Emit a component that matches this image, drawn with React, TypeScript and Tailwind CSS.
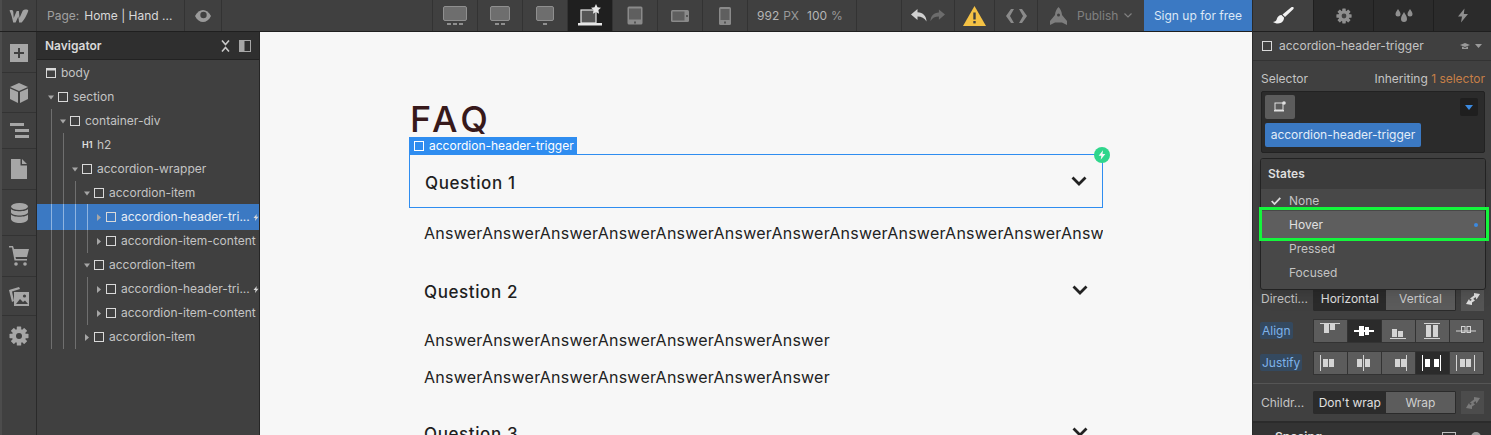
import React from 'react';

const ui = "font-['Inter','Liberation_Sans',sans-serif]";

function Box({ className = '' }: { className?: string }) {
    return <span className={`block w-[10px] h-[10px] border border-[#d9d9d9] shrink-0 ${className}`} />;
}

function Caret({ open }: { open: boolean }) {
    return (
        <svg width="6" height="7" viewBox="0 0 6 7" className="shrink-0 ml-[-3px] mr-[4px]">
            {open ? <path d="M0 1.500h6L3 5.500z" fill="#a6a6a6" /> : <path d="M1 0v7L5 3.500z" fill="#a6a6a6" />}
        </svg>
    );
}

function Guides({ n, light }: { n: number; light?: boolean }) {
    return (
        <>
            {Array.from({ length: n }).map((_, i) => (
                <span key={i} className={`block w-[12px] h-full shrink-0 border-l ${light ? 'border-[#8fb4e0]' : 'border-[#6f6f6f]'}`} />
            ))}
        </>
    );
}

function Bolt({ className = '' }: { className?: string }) {
    return (
        <svg viewBox="0 0 12 14" className={className} fill="currentColor">
            <path d="M7.500 0 1 8h4l-1 6 7-8.500H6.800z" />
        </svg>
    );
}

function Gear({ size, color }: { size: number; color: string }) {
    const teeth = [0, 45, 90, 135];
    return (
        <svg width={size} height={size} viewBox="0 0 20 20">
            {teeth.map((a) => (
                <rect key={a} x="7.800" y="0.500" width="4.400" height="19" rx="0.600" fill={color} transform={`rotate(${a} 10 10)`} />
            ))}
            <circle cx="10" cy="10" r="7" fill={color} />
            <circle cx="10" cy="10" r="3" fill="#404040" />
        </svg>
    );
}

type Row = { label: string; depth: number; caret?: 'open' | 'closed'; selected?: boolean; bolt?: boolean };

const ROWS: Row[] = [
    { label: 'section', depth: 0, caret: 'open' },
    { label: 'container-div', depth: 1, caret: 'open' },
    { label: 'h2', depth: 2 },
    { label: 'accordion-wrapper', depth: 2, caret: 'open' },
    { label: 'accordion-item', depth: 3, caret: 'open' },
    { label: 'accordion-header-tri...', depth: 4, caret: 'closed', selected: true, bolt: true },
    { label: 'accordion-item-content', depth: 4, caret: 'closed' },
    { label: 'accordion-item', depth: 3, caret: 'open' },
    { label: 'accordion-header-tri...', depth: 4, caret: 'closed', bolt: true },
    { label: 'accordion-item-content', depth: 4, caret: 'closed' },
    { label: 'accordion-item', depth: 3, caret: 'closed' },
];

function TreeRow({ row }: { row: Row }) {
    const isH = row.label === 'h2';
    return (
        <div
            className={`relative flex items-center pl-[14px] whitespace-nowrap overflow-hidden ${
                row.selected ? 'h-[26px] -my-px z-10 bg-[#3b79c3] text-[#e8eef6]' : 'h-[24px] text-[#c4c4c4]'
            }`}
        >
            <Guides n={row.depth} light={row.selected} />
            {isH ? (
                <span className="ml-[7px] mr-[6px] text-[9px] font-semibold text-[#e0e0e0] w-[9px]">H1</span>
            ) : (
                <>
                    {row.caret && <Caret open={row.caret === 'open'} />}
                    <Box className="mr-[5px]" />
                </>
            )}
            <span>{row.label}</span>
            {row.bolt && <Bolt className="absolute right-0 w-[6px] h-[9px] text-[#d9d9d9]" />}
        </div>
    );
}

function Monitor({ dots }: { dots: number }) {
    const w = dots === 3 ? 24 : dots === 2 ? 20 : 18;
    return (
        <div className="flex flex-col items-center gap-[2px]">
            <span className="block h-[15px] bg-[#6e6e6e] border-[1.5px] border-[#8f8f8f] rounded-[2px]" style={{ width: w }} />
            <span className="flex gap-[2px]">
                {Array.from({ length: dots }).map((_, i) => (
                    <span key={i} className="block w-[4px] h-[2px] bg-[#8f8f8f]" />
                ))}
            </span>
        </div>
    );
}

function Cell({ children, active }: { children: React.ReactNode; active?: boolean }) {
    return (
        <div className={`w-[45px] h-full flex items-center justify-center border-r border-[#333] ${active ? 'bg-[#1f1f1f]' : ''}`}>
            {children}
        </div>
    );
}

function TopBar() {
    return (
        <div className={`h-[32px] flex items-stretch bg-[#404040] border-b border-[#1f1f1f] text-[12px] ${ui}`}>
            <div className="w-[37px] flex items-center justify-center border-r border-[#333] border-l-2 border-l-[#4c4c4c]">
                <svg width="20" height="14" viewBox="0 0 20 14">
                    <path d="M0.500 1.500c2 -.8 3.600 -.6 3.800 1.500l.4 6 3-7h2.200l.6 7 3.200-7.200c1-1.400 5-1.800 5.600-.4-.4 3-4.600 10-6.600 12.100h-2.600l-.8-5.900-2.700 5.900H4.200C3.400 9.500 2.300 5 .5 1.500z" fill="#a3a3a3" />
                </svg>
            </div>
            <div className="w-[148px] flex items-center pl-[10px] whitespace-nowrap border-r border-[#333]">
                <span className="text-[#a0a0a0] mr-[5px]">Page:</span>
                <span className="text-[#d9d9d9]">Home | Hand ...</span>
            </div>
            <div className="w-[37px] flex items-center justify-center border-r border-[#333]">
                <svg width="16" height="12" viewBox="0 0 16 12">
                    <path d="M0 6c2-4 5-6 8-6s6 2 8 6c-2 4-5 6-8 6S2 10 0 6z" fill="#9a9a9a" />
                    <circle cx="8.500" cy="5" r="3.200" fill="#404040" />
                </svg>
            </div>
            <div className="w-[211px] border-r border-[#333]" />
            <Cell><Monitor dots={3} /></Cell>
            <Cell><Monitor dots={2} /></Cell>
            <Cell><Monitor dots={1} /></Cell>
            <Cell active>
                <svg width="26" height="24" viewBox="0 0 26 24">
                    <rect x="4" y="6" width="15" height="13" fill="#555" stroke="#e6e6e6" strokeWidth="1.200" />
                    <rect x="1" y="19" width="24" height="2.500" fill="#e6e6e6" />
                    <path d="M19 0l1.500 3.300 3.500.4-2.600 2.400.7 3.600-3.100-1.800-3.100 1.800.7-3.600L14 3.700l3.500-.4z" fill="#e6e6e6" />
                </svg>
            </Cell>
            <Cell>
                <svg width="16" height="20" viewBox="0 0 16 20">
                    <rect x="0.500" y="0.500" width="15" height="18" rx="1.500" fill="#8a8a8a" />
                    <rect x="2" y="2.500" width="12" height="11" fill="#5f5f5f" />
                    <rect x="7" y="15.500" width="2" height="2" fill="#555" />
                </svg>
            </Cell>
            <Cell>
                <svg width="18" height="12" viewBox="0 0 18 12">
                    <rect x="0" y="0" width="18" height="12" rx="1.500" fill="#8a8a8a" />
                    <rect x="1.500" y="1.500" width="12" height="9" fill="#5f5f5f" />
                    <rect x="15" y="5" width="2" height="2" fill="#555" />
                </svg>
            </Cell>
            <div className="w-[45px] h-full flex items-center justify-center border-r border-[#333]">
                <svg width="12" height="18" viewBox="0 0 12 18">
                    <rect width="12" height="18" rx="1.500" fill="#8a8a8a" />
                    <rect x="1.500" y="2" width="9" height="11" fill="#5f5f5f" />
                    <rect x="5" y="14.500" width="2" height="2" fill="#555" />
                </svg>
            </div>
            <div className="w-[109px] flex items-center pl-[9px] text-[#b5b5b5] whitespace-nowrap border-r border-[#333]">
                <span>992</span>
                <span className="ml-[4px] text-[#9a9a9a]">PX</span>
                <span className="ml-[8px]">100</span>
                <span className="ml-[4px] text-[#9a9a9a]">%</span>
            </div>
            <div className="w-[45px] border-r border-[#333]" />
            <div className="w-[53px] flex items-center justify-center gap-[3px] border-r border-[#333]">
                <svg width="16" height="13" viewBox="0 0 16 13">
                    <path d="M6.500 0 0 5.500 6.500 11V7.500c4 0 7 1.500 9 5C15.500 7 12 3.500 6.500 3.200z" fill="#d0d0d0" />
                </svg>
                <svg width="15" height="13" viewBox="0 0 16 13">
                    <path d="M9.500 0 16 5.500 9.500 11V7.500c-4 0-7 1.500-9 5C.5 7 4 3.500 9.500 3.200z" fill="#6c6c6c" />
                </svg>
            </div>
            <div className="w-[40px] flex items-center justify-center border-r border-[#333]">
                <svg width="23" height="20" viewBox="0 0 23 20">
                    <path d="M11.500 0 23 20H0z" fill="#f5c244" />
                    <rect x="10.300" y="6.500" width="2.400" height="7" fill="#404040" />
                    <rect x="10.300" y="15" width="2.400" height="2.400" fill="#404040" />
                </svg>
            </div>
            <div className="w-[43px] flex items-center justify-center border-r border-[#333]">
                <svg width="21" height="14" viewBox="0 0 21 14" fill="#8a8a8a">
                    <path d="M5 0h3L4 7l4 7H5L0 7zM16 0h-3l4 7-4 7h3l5-7z" />
                </svg>
            </div>
            <div className="flex-1 flex items-center pl-[12px] text-[#808080] whitespace-nowrap">
                <svg width="17" height="18" viewBox="0 0 17 18" className="mr-[10px]" fill="#7d7d7d">
                    <path d="M8.500 0c2.200 2 3.300 5 3.500 8l5 6v4l-5-2.500H5L0 18v-4l5-6c.2-3 1.300-6 3.500-8z" />
                    <circle cx="8.500" cy="8" r="1.500" fill="#404040" />
                </svg>
                <span>Publish</span>
                <svg width="8" height="5" viewBox="0 0 8 5" className="ml-[6px]">
                    <path d="M.5.5 4 4 7.500.5" fill="none" stroke="#808080" strokeWidth="1.200" />
                </svg>
            </div>
            <div className="w-[108px] flex items-center justify-center bg-[#3b79c3] text-[#dce8f6] whitespace-nowrap">Sign up for free</div>
        </div>
    );
}

function SideRail() {
    return (
        <div className="w-[37px] shrink-0 flex flex-col bg-[#404040] border-r border-[#2a2a2a] border-l-2 border-l-[#4c4c4c]">
            <div className="h-[41px] flex items-center justify-center border-b border-[#333] pt-[1px]">
                <span className="w-[18px] h-[18px] bg-[#a6a6a6] flex items-center justify-center">
                    <svg width="10" height="10" viewBox="0 0 10 10"><path d="M4 0h2v4h4v2H6v4H4V6H0V4h4z" fill="#404040" /></svg>
                </span>
            </div>
            <div className="h-[40px] flex items-center justify-center border-b border-[#333]">
                <svg width="18" height="20" viewBox="0 0 18 20" fill="#a6a6a6">
                    <path d="M9 0l9 4-9 4-9-4zM0 5.500l8 3.600V20l-8-4zM18 5.500l-8 3.600V20l8-4z" />
                </svg>
            </div>
            <div className="h-[36px] flex items-center justify-center border-b border-[#333]">
                <svg width="19" height="15" viewBox="0 0 19 15" fill="#a6a6a6">
                    <path d="M0 0h14v3H0zM5 6h14v3H5zM5 12h14v3H5z" />
                </svg>
            </div>
            <div className="h-[41px] flex items-center justify-center border-b border-[#333]">
                <svg width="16" height="20" viewBox="0 0 16 20" fill="#a6a6a6">
                    <path d="M0 0h9.500v6.500H16V20H0zM11 0l5 5h-5z" />
                </svg>
            </div>
            <div className="h-[46px] flex items-center justify-center border-b border-[#333]">
                <svg width="17" height="20" viewBox="0 0 17 20" fill="#a6a6a6">
                    <ellipse cx="8.500" cy="3.500" rx="8.500" ry="3.500" />
                    <path d="M0 6c2 3 15 3 17 0v3.500c-1 4-16 4-17 0zM0 11.500c2 3 15 3 17 0V16c-1 5.300-16 5.300-17 0z" />
                </svg>
            </div>
            <div className="h-[41px] flex items-center justify-center border-b border-[#333]">
                <svg width="20" height="20" viewBox="0 0 20 20" fill="#a6a6a6">
                    <path d="M0 0h4l1 3h15l-2 8H6.500l.5 2h11v1.500H5.500L3 1.500H0z" />
                    <circle cx="7" cy="18" r="1.800" />
                    <circle cx="16" cy="18" r="1.800" />
                </svg>
            </div>
            <div className="h-[39px] flex items-center justify-center border-b border-[#333]">
                <svg width="20" height="19" viewBox="0 0 20 19" fill="#a6a6a6">
                    <path d="M0 3 10 0l1 2-8 2.500L5 14l-2 1z" />
                    <path d="M5 5h15v14H5z" />
                    <circle cx="15.500" cy="9" r="1.600" fill="#404040" />
                    <path d="M7 17l4-5 3 3 2-1.500 3 3.500z" fill="#404040" />
                </svg>
            </div>
            <div className="h-[39px] flex items-center justify-center">
                <Gear size={20} color="#a6a6a6" />
            </div>
        </div>
    );
}

function Navigator() {
    return (
        <div className={`w-[223px] shrink-0 bg-[#404040] border-r border-[#262626] text-[12px] ${ui}`}>
            <div className="h-[28px] flex items-center justify-between pl-[8px] pr-[8px] bg-[#2f2f2f] border-b border-[#222]">
                <span className="text-[#d9d9d9] text-[12px] font-semibold">Navigator</span>
                <div className="flex items-center gap-[9px]">
                    <svg width="9" height="12" viewBox="0 0 9 12" fill="none" stroke="#c9c9c9" strokeWidth="1.600">
                        <path d="M1 .5l3.500 4L8 .5M1 11.500l3.500-4 3.500 4" />
                    </svg>
                    <svg width="12" height="12" viewBox="0 0 12 12">
                        <rect x="0" y="0" width="5" height="12" fill="#a6a6a6" />
                        <rect x="5" y="0.500" width="6.500" height="11" fill="none" stroke="#a6a6a6" />
                    </svg>
                </div>
            </div>
            <div className="pt-[1px]">
                <div className="h-[24px] flex items-center pl-[9px] text-[#c4c4c4]">
                    <svg width="10" height="10" viewBox="0 0 10 10" className="mr-[5px] shrink-0">
                        <rect x="0.500" y="0.500" width="9" height="9" fill="none" stroke="#d9d9d9" />
                        <rect x="0.500" y="0.500" width="9" height="2" fill="#d9d9d9" />
                    </svg>
                    body
                </div>
                {ROWS.map((row, i) => (
                    <TreeRow key={i} row={row} />
                ))}
            </div>
        </div>
    );
}

function Question({ label, className = '' }: { label: string; className?: string }) {
    return (
        <div className={`flex items-center justify-between pl-[15px] pr-[15px] text-[17px] font-medium tracking-[0.6px] text-[#1f1f1f] ${className}`}>
            <span>{label}</span>
            <svg width="16" height="10" viewBox="0 0 16 10" fill="none" stroke="#222" strokeWidth="2.800" className="mb-[6px]">
                <path d="M1.500 1.500 8 8l6.500-6.500" />
            </svg>
        </div>
    );
}

function Canvas() {
    const answer = 'Answer'.repeat(7);
    const body = 'pl-[15px] text-[16px] leading-[24px] tracking-[0.24px] text-[#222]';
    return (
        <div className="flex-1 bg-[#f7f7f7] overflow-hidden pt-[69px] pl-[149px] font-['Inter',sans-serif]">
            <div className="w-[694px]">
                <h2 className="h-[53px] pt-[3px] pl-[1px] text-[36px] leading-[30px] font-medium text-[#37191b] tracking-[4px]">FAQ</h2>
                <div className="relative h-[54px] border border-[#2f8df0] flex">
                    <Question label="Question 1" className="w-full pt-[6px]" />
                    <div className={`absolute left-[-1px] top-[-18px] h-[18px] w-[168px] bg-[#2f8df0] text-white flex items-center pl-[5px] text-[12px] whitespace-nowrap ${ui}`}>
                        <Box className="mr-[5px] border-white" />
                        accordion-header-trigger
                    </div>
                    <div className="absolute right-[-8px] top-[-8px] w-[16px] h-[16px] rounded-full bg-[#2fd68c] flex items-center justify-center text-[#f7f7f7]">
                        <Bolt className="w-[8px] h-[10px]" />
                    </div>
                </div>
                <div className={`${body} h-[50px] pt-[13px] whitespace-nowrap overflow-hidden`}>{answer}{answer}</div>
                <Question label="Question 2" className="h-[66px] pt-[4px]" />
                <div className={`${body} pt-[4px]`}>{answer}</div>
                <div className={`${body} pt-[13px]`}>{answer}</div>
                <Question label="Question 3" className="h-[66px] pt-[26px]" />
            </div>
        </div>
    );
}

function Seg({ children, dark, className = '' }: { children: React.ReactNode; dark?: boolean; className?: string }) {
    return (
        <div className={`flex items-center justify-center h-full whitespace-nowrap ${dark ? 'bg-[#2b2b2b] text-[#e0e0e0]' : 'bg-[#5c5c5c] text-[#cfcfcf]'} ${className}`}>
            {children}
        </div>
    );
}

function Swap({ dim }: { dim?: boolean }) {
    return (
        <svg width="14" height="14" viewBox="0 0 14 14" fill={dim ? '#7a7a7a' : '#e0e0e0'}>
            <path d="M14 2 8 1v2.500L4 6.500l2 1.500 3.500-3 1 2.500zM0 12l6 1v-2.500l3-2-1.500-1.500L4 9 3 7z" />
        </svg>
    );
}

function AlignIcon({ kind, light }: { kind: number; light?: boolean }) {
    const c = light ? '#fff' : '#d4d4d4';
    return (
        <svg width="20" height="16" viewBox="0 0 20 16" fill={c}>
            {kind === 0 && <><rect x="0" y="0" width="20" height="1" /><rect x="4" y="1" width="5" height="9" /><rect x="10" y="1" width="5" height="6" /></>}
            {kind === 1 && <><rect x="0" y="7" width="20" height="2" /><rect x="5" y="3" width="5" height="10" /><rect x="11" y="4" width="4" height="8" /></>}
            {kind === 2 && <><rect x="2" y="15" width="16" height="1" /><rect x="4" y="6" width="5" height="8" /><rect x="10" y="8" width="5" height="6" /></>}
            {kind === 3 && <><rect x="2" y="0" width="16" height="1" /><rect x="2" y="15" width="16" height="1" /><rect x="4" y="2" width="5" height="12" /><rect x="11" y="2" width="5" height="12" /></>}
            {kind === 4 && <><rect x="0" y="7.500" width="20" height="1" /><rect x="5.500" y="3.500" width="3.500" height="6" fill="none" stroke={c} /><rect x="11" y="3.500" width="3.500" height="6" fill="none" stroke={c} /></>}
        </svg>
    );
}

function JustifyIcon({ kind, light }: { kind: number; light?: boolean }) {
    const c = light ? '#fff' : '#d4d4d4';
    const bars = kind === 0 ? [[0], [3, 9]] : kind === 1 ? [[9], [3, 11]] : kind === 2 ? [[18], [7, 13]] : kind === 3 ? [[0, 18], [3, 12]] : [[0, 18], [4, 10]];
    return (
        <svg width="20" height="16" viewBox="0 0 20 16" fill={c}>
            {bars[0].map((x) => <rect key={x} x={x} y="0" width="1" height="16" />)}
            {bars[1].map((x) => <rect key={x} x={x} y="4" width="5" height="8" />)}
        </svg>
    );
}

function RightPanel() {
    return (
        <div className={`relative w-[239px] shrink-0 bg-[#404040] border-l border-[#2a2a2a] text-[12px] text-[#c4c4c4] ${ui}`}>
            <div className="h-[32px] flex bg-[#2b2b2b] border-b border-[#1f1f1f]">
                <div className="w-[60px] flex items-center justify-center bg-[#404040]">
                    <svg width="21" height="17" viewBox="0 0 21 17" fill="#f2f2f2">
                        <path d="M20 0c1 .5 1 1.500.2 2.200L12 10 9.500 7.500 18 .4c.7-.5 1.400-.7 2-.4z" />
                        <path d="M8.500 8 11 10.500c.3 3-2.500 6-6 6-2 0-4-.7-5-1.500 3-.2 3.500-2 4-3.500S6 8 8.500 8z" />
                    </svg>
                </div>
                <div className="w-[60px] flex items-center justify-center border-l border-[#1f1f1f]"><Gear size={16} color="#8f8f8f" /></div>
                <div className="w-[60px] flex items-center justify-center border-l border-[#1f1f1f]">
                    <svg width="18" height="14" viewBox="0 0 18 14" fill="#8f8f8f">
                        <path d="M3 0c1 2 2.500 3 2.500 5a2.500 2.500 0 0 1-5 0C.5 3 2 2 3 0zM15 0c1 2 2.500 3 2.500 5a2.500 2.500 0 0 1-5 0c0-2 1.500-3 2.500-5zM9 3c1.200 2.500 3 4 3 7a3 3 0 0 1-6 0c0-3 1.800-4.500 3-7z" />
                    </svg>
                </div>
                <div className="flex-1 flex items-center justify-center border-l border-[#1f1f1f]">
                    <Bolt className="w-[12px] h-[15px] text-[#8f8f8f]" />
                </div>
            </div>
            <div className="h-[29px] flex items-center pl-[9px] pr-[7px] border-b border-[#333]">
                <Box className="mr-[7px] border-[#bdbdbd]" />
                <span className="flex-1 whitespace-nowrap">accordion-header-trigger</span>
                <svg width="10" height="7" viewBox="0 0 10 7" fill="#9a9a9a" className="mr-[5px]">
                    <path d="M5 0l5 2-5 2-5-2zM2 3.500 5 5l3-1.500V6H2z" />
                </svg>
                <svg width="7" height="4" viewBox="0 0 7 4" fill="#9a9a9a" className="mr-[2px]"><path d="M0 0h7L3.500 4z" /></svg>
            </div>
            <div className="h-[30px] flex items-center justify-between pl-[8px] pr-[6px] pt-[5px] whitespace-nowrap">
                <span>Selector</span>
                <span>Inheriting <span className="text-[#c67f47]">1 selector</span></span>
            </div>
            <div className="mx-[8px] w-[224px] h-[62px] bg-[#2b2b2b] border border-[#222] rounded-[2px] p-[3px] relative">
                <div className="w-[30px] h-[24px] bg-[#5c5c5c] rounded-[2px] flex items-center justify-center">
                    <svg width="12" height="12" viewBox="0 0 12 12">
                        <rect x="1" y="2" width="8" height="7" fill="none" stroke="#e0e0e0" />
                        <rect x="0" y="9" width="10" height="1.500" fill="#e0e0e0" />
                        <circle cx="10" cy="2" r="1.800" fill="#e0e0e0" />
                    </svg>
                </div>
                <div className="mt-[4px] w-[156px] h-[24px] bg-[#3b79c3] rounded-[2px] flex items-center justify-center text-[#e3edf8] whitespace-nowrap">accordion-header-trigger</div>
                <div className="absolute right-[6px] top-[6px] w-[18px] h-[18px] bg-[#1f1f1f] rounded-[2px] flex items-center justify-center">
                    <svg width="8" height="5" viewBox="0 0 8 5" fill="#3b8ae0"><path d="M0 0h8L4 5z" /></svg>
                </div>
            </div>
            <div className="h-[135px]" />
            <div className="h-[22px] flex items-center pl-[8px] pr-[7px]">
                <span className="w-[52px] whitespace-nowrap">Directi...</span>
                <div className="w-[144px] h-[23px] flex border border-[#2b2b2b] rounded-[1px] overflow-hidden">
                    <Seg dark className="w-[72px]">Horizontal</Seg>
                    <Seg className="flex-1">Vertical</Seg>
                </div>
                <div className="ml-[5px] w-[23px] h-[23px] bg-[#555] flex items-center justify-center"><Swap /></div>
            </div>
            <div className="h-[24px] mt-[9px] flex items-center pl-[7px] pr-[7px]">
                <span className="w-[53px]"><span className="px-[2px] py-[1px] rounded-[2px] bg-[#34495f] text-[#7fb3ea]">Align</span></span>
                <div className="w-[172px] h-[24px] grid grid-cols-5 gap-px bg-[#333] border border-[#333]">
                    {[0, 1, 2, 3, 4].map((k) => (
                        <Seg key={k} dark={k === 1}><AlignIcon kind={k} light={k === 1} /></Seg>
                    ))}
                </div>
            </div>
            <div className="h-[24px] mt-[8px] flex items-center pl-[7px] pr-[7px]">
                <span className="w-[53px]"><span className="px-[2px] py-[1px] rounded-[2px] bg-[#34495f] text-[#7fb3ea]">Justify</span></span>
                <div className="w-[172px] h-[24px] grid grid-cols-5 gap-px bg-[#333] border border-[#333]">
                    {[0, 1, 2, 3, 4].map((k) => (
                        <Seg key={k} dark={k === 3}><JustifyIcon kind={k} light={k === 3} /></Seg>
                    ))}
                </div>
            </div>
            <div className="mt-[8px] border-t border-[#555] h-[40px] flex items-center pl-[8px] pr-[7px] border-b-2 border-b-[#2b2b2b]">
                <span className="w-[52px] whitespace-nowrap">Childr...</span>
                <div className="w-[144px] h-[23px] flex border border-[#2b2b2b] rounded-[1px] overflow-hidden">
                    <Seg dark className="w-[72px]">Don't wrap</Seg>
                    <Seg className="flex-1">Wrap</Seg>
                </div>
                <div className="ml-[5px] w-[23px] h-[23px] bg-[#4c4c4c] flex items-center justify-center"><Swap dim /></div>
            </div>
            <div className="h-[24px] pt-[3px] bg-[#333] flex items-center pl-[9px] pr-[10px] text-[#e0e0e0] font-semibold">
                <svg width="7" height="4" viewBox="0 0 7 4" fill="#bdbdbd" className="mr-[6px]"><path d="M0 0h7L3.500 4z" /></svg>
                <span className="flex-1">Spacing</span>
                <span className="block w-[14px] h-[10px] border border-[#bdbdbd] mr-[15px]" />
                <span className="block w-[10px] h-[10px] rounded-full bg-[#9a9a9a]" />
            </div>

            <div className="absolute left-[7px] top-[158px] w-[226px] h-[132px] bg-[#484848] border border-[#222] rounded-[3px] shadow-lg overflow-hidden">
                <div className="h-[30px] flex items-center pl-[7px] bg-[#3c3c3c] font-semibold text-[#dedede]">States</div>
                {['None', 'Hover', 'Pressed', 'Focused'].map((s, i) => (
                    <div key={s} className={`relative flex items-center pl-[28px] ${i === 1 ? 'h-[28px] -my-[2px] bg-[#5e5e5e] text-[#e0e0e0]' : 'h-[24px] text-[#c4c4c4]'}`}>
                        {i === 0 && (
                            <svg width="10" height="8" viewBox="0 0 10 8" fill="none" stroke="#d9d9d9" strokeWidth="1.800" className="absolute left-[10px] top-[8px]">
                                <path d="M.7 4 3.500 7 9.300.8" />
                            </svg>
                        )}
                        {s}
                        {i === 1 && <span className="absolute right-[7px] w-[4px] h-[4px] rounded-full bg-[#3b8ae0]" />}
                    </div>
                ))}
            </div>
            <div className="absolute left-[6px] top-[207px] w-[230px] h-[34px] border-[3px] border-[#14f53c]" />
        </div>
    );
}

export default function App() {
    return (
        <div className="h-[435px] w-[1491px] flex overflow-hidden">
            <div className="flex-1 min-w-0 flex flex-col">
                <TopBar />
                <div className="flex-1 min-h-0 flex">
                    <SideRail />
                    <Navigator />
                    <Canvas />
                </div>
            </div>
            <RightPanel />
        </div>
    );
}
